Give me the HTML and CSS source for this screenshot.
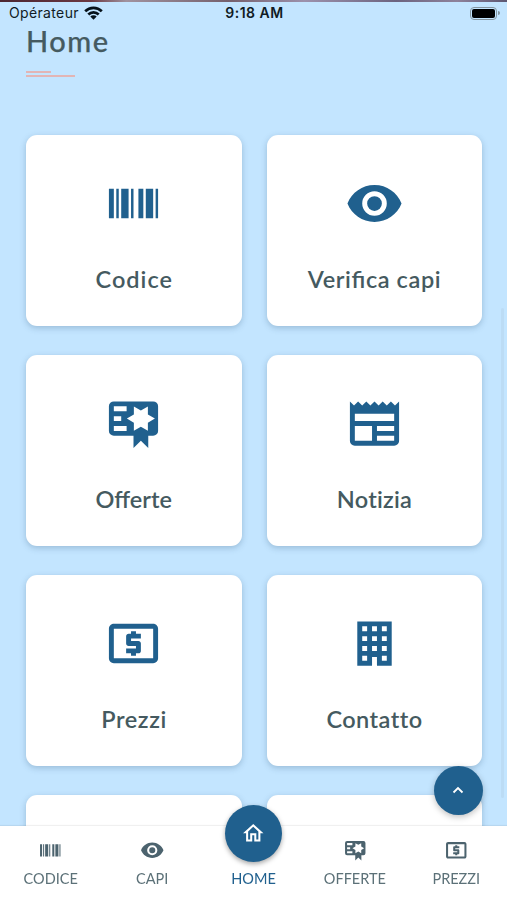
FILE: index.html
```html
<!DOCTYPE html>
<html lang="it">
<head>
<meta charset="utf-8">
<title>Home</title>
<link rel="stylesheet" href="styles.css">
</head>
<body>
<svg class="defs" aria-hidden="true">
  <symbol id="barcode" viewBox="0 0 24 24"><path d="M2 6h2v12H2zM5 6h1v12H5zM7 6h3v12H7zM11 6h1v12h-1zM14 6h2v12h-2zM17 6h3v12h-3zM21 6h1v12h-1z"/></symbol>
  <symbol id="eye" viewBox="0 0 24 24"><path d="M12 9a3 3 0 0 0 0 6 3 3 0 0 0 0-6M12 17A5 5 0 0 1 12 7a5 5 0 0 1 0 10M12 4.500C7 4.500 2.730 7.610 1 12c1.730 4.390 6 7.500 11 7.500s9.270-3.110 11-7.500C21.270 7.610 17 4.500 12 4.500z"/></symbol>
  <symbol id="offer" viewBox="0 0 24 24"><path fill-rule="evenodd" d="M4 3h16a2 2 0 0 1 2 2v10a2 2 0 0 1-2 2h-2v5l-3-3-3 3v-5H4a2 2 0 0 1-2-2V5a2 2 0 0 1 2-2zM4 5v2h5.200V5zM4 9v2h3V9zM4 13v2h5.200v-2zM20.700 10l-2.850-1.650V5.060L15 6.710l-2.850-1.650v3.290L9.300 10l2.850 1.650v3.290L15 13.290l2.850 1.650v-3.290z"/></symbol>
  <symbol id="news" viewBox="0 0 24 24"><path d="M22 3l-1.670 1.670L18.670 3 17 4.670 15.330 3l-1.660 1.670L12 3l-1.670 1.670L8.670 3 7 4.670 5.330 3 3.670 4.670 2 3v16c0 1.100.9 2 2 2h16c1.100 0 2-.9 2-2V3zM11 19H4v-6h7v6zm9 0h-7v-2h7v2zm0-4h-7v-2h7v2zm0-4H4V8h16v3z"/></symbol>
  <symbol id="cash" viewBox="0 0 24 24"><path d="M11 17h2v-1h1c.55 0 1-.45 1-1v-3c0-.55-.45-1-1-1h-3v-1h4V8h-2V7h-2v1h-1c-.55 0-1 .45-1 1v3c0 .55.450 1 1 1h3v1H9v2h2v1zm9-13H4c-1.110 0-2 .89-2 2v12c0 1.110.89 2 2 2h16c1.110 0 2-.89 2-2V6c0-1.110-.89-2-2-2zm0 14H4V6h16v12z"/></symbol>
  <symbol id="building" viewBox="0 0 24 24"><path fill-rule="evenodd" d="M5 3v18h6v-3.500h2V21h6V3zM7 5h2v2H7zM11 5h2v2h-2zM15 5h2v2h-2zM7 9h2v2H7zM11 9h2v2h-2zM15 9h2v2h-2zM7 13h2v2H7zM11 13h2v2h-2zM15 13h2v2h-2zM7 17h2v2H7zM15 17h2v2h-2z"/></symbol>
  <symbol id="house" viewBox="0 0 24 24"><path d="M12 5.690l5 4.500V18h-2v-6H9v6H7v-7.810l5-4.500M12 3L2 12h3v8h6v-6h2v6h6v-8h3"/></symbol>
</svg>

<header class="status">
  <div class="carrier"><span class="carrier-name">Opérateur</span>
    <svg class="wifi" viewBox="0 0 19 14"><g fill="none" stroke="#06121a" stroke-width="2.700"><path d="M1.200 5.200a11.800 11.800 0 0 1 16.600 0"/><path d="M4.300 8.500a7.400 7.400 0 0 1 10.400 0"/></g><path fill="#06121a" d="M6.300 10.500a4.500 4.500 0 0 1 6.400 0L9.500 13.700z"/></svg>
  </div>
  <div class="time">9:18 AM</div>
  <div class="battery"><span class="cell"><span class="charge"></span></span><span class="tip"></span></div>
</header>

<main class="page">
  <h1 class="title">Home</h1>
  <div class="rule"><span class="rule-short"></span><span class="rule-long"></span></div>
  <section class="grid">
    <a class="card"><svg class="icon"><use href="#barcode"/></svg><span class="label codice">Codice</span></a>
    <a class="card"><svg class="icon"><use href="#eye"/></svg><span class="label verifica">Verifica capi</span></a>
    <a class="card"><svg class="icon"><use href="#offer"/></svg><span class="label offerte">Offerte</span></a>
    <a class="card"><svg class="icon"><use href="#news"/></svg><span class="label notizia">Notizia</span></a>
    <a class="card"><svg class="icon"><use href="#cash"/></svg><span class="label prezzi">Prezzi</span></a>
    <a class="card"><svg class="icon"><use href="#building"/></svg><span class="label contatto">Contatto</span></a>
    <a class="card short"></a>
    <a class="card short"></a>
  </section>
</main>

<div class="scrollbar"></div>
<button class="to-top" aria-label="Su"><svg viewBox="0 0 12 8"><path d="M1.500 6.500L6 2l4.500 4.500"/></svg></button>

<nav class="tabs">
  <a class="tab"><svg class="tab-icon"><use href="#barcode"/></svg><span>CODICE</span></a>
  <a class="tab"><svg class="tab-icon"><use href="#eye"/></svg><span>CAPI</span></a>
  <a class="tab active"><span class="bubble"><svg class="tab-icon"><use href="#house"/></svg></span><span>HOME</span></a>
  <a class="tab"><svg class="tab-icon"><use href="#offer"/></svg><span>OFFERTE</span></a>
  <a class="tab"><svg class="tab-icon"><use href="#cash"/></svg><span>PREZZI</span></a>
</nav>
</body>
</html>
```
FILE: styles.css
```css
* { box-sizing: border-box; }

body {
  margin: 0;
  height: 900px;
  overflow: hidden;
  background: #c3e5ff;
  color: #455a60;
  font-family: Lato, "Liberation Sans", sans-serif;
}

.defs { position: absolute; width: 0; height: 0; }

.status {
  height: 24px;
  padding: 0 7px 0 9px;
  border-top: 2px solid #8d8299;
  border-image: linear-gradient(90deg, #4b2631, #6b3942 18%, #a0929f 25%, #75606c 45%, #9c91ac 60%, #6c637f 78%, #8e829b 90%, #5c5670) 1;
  display: grid;
  grid-template-columns: 1fr auto 1fr;
  align-items: center;
  font-family: Inter, "Liberation Sans", sans-serif;
  color: #101b24;
}
.carrier { display: flex; align-items: center; gap: 5px; font-size: 14px; line-height: 20px; }
.carrier-name { letter-spacing: 0.350px; }
.wifi { width: 19px; height: 14px; }
.time { font-size: 14px; font-weight: 600; line-height: 20px; letter-spacing: 0.5px; }
.battery { display: flex; justify-content: flex-end; align-items: center; gap: 1px; }
.cell { width: 27px; height: 13px; padding: 1px; border: 1px solid #84959f; border-radius: 4px; display: flex; }
.charge { flex: 1; border-radius: 2px; background: #000; }
.tip { width: 2px; height: 4px; border-radius: 0 2px 2px 0; background: #84959f; }

.page { height: 802px; overflow: hidden; padding: 0 25px 0 26px; }
.title { margin: 0; font-size: 29px; line-height: 34px; font-weight: 500; letter-spacing: 1.500px; -webkit-text-stroke: 0.250px; }
.rule { margin-top: 13px; height: 6px; display: flex; flex-direction: column; gap: 2px; }
.rule-short { width: 25px; height: 2px; background: #e2b5b5; }
.rule-long { width: 49px; height: 2px; background: #e2b5b5; }

.grid {
  margin-top: 57.500px;
  display: grid;
  grid-template-columns: 215.500px 215px;
  justify-content: space-between;
  grid-auto-rows: 191.500px;
  row-gap: 28.500px;
}
.card {
  display: flex;
  flex-direction: column;
  align-items: center;
  padding-top: 39.500px;
  border-radius: 11px;
  background: #fff;
  box-shadow: 0 2px 6px rgba(40, 80, 110, 0.28);
}
.short { height: 32px; border-radius: 11px 11px 0 0; }
.icon { width: 59px; height: 59px; fill: #20608e; }
.label {
  margin-top: 31px;
  font-size: 23.500px;
  line-height: 30px;
  font-weight: 600;
  white-space: nowrap;
}
.codice { letter-spacing: 1px; margin-right: -1px; }
.verifica { letter-spacing: 0.6px; font-feature-settings: "liga" 1; }
.offerte { letter-spacing: 0; }
.notizia { letter-spacing: 0.250px; }
.prezzi { letter-spacing: 0.6px; margin-right: -0.6px; }
.contatto { letter-spacing: 0.450px; font-variant-ligatures: none; }

.scrollbar { position: fixed; right: 3px; top: 308px; width: 3px; height: 490px; background: #bcdcf5; border-radius: 2px; }

.to-top {
  position: fixed;
  left: 433.500px;
  top: 765.500px;
  width: 49px;
  height: 49px;
  padding: 0;
  border: 0;
  border-radius: 50%;
  display: flex;
  align-items: center;
  justify-content: center;
  background: #20608e;
  box-shadow: 0 2px 6px rgba(0, 0, 0, 0.25);
}
.to-top svg { width: 12px; height: 8px; fill: none; stroke: #fff; stroke-width: 1.800; }

.tabs {
  position: fixed;
  inset: auto 0 0;
  height: 74px;
  display: grid;
  grid-template-columns: repeat(5, 1fr);
  background: #fff;
  box-shadow: 0 -1px 1px rgba(0, 0, 0, 0.06);
}
.tab {
  display: flex;
  flex-direction: column;
  align-items: center;
  justify-content: space-between;
  padding: 12px 0 11px;
  font-size: 14.500px;
  line-height: 20px;
  color: #5c7178;
}
.tab-icon { width: 24.500px; height: 24.500px; fill: #4c636e; }
.active { padding-top: 0; color: #20608e; }
.bubble {
  width: 57px;
  height: 57px;
  margin-top: -21.500px;
  border-radius: 50%;
  display: flex;
  align-items: center;
  justify-content: center;
  background: #20608e;
  box-shadow: 0 2px 5px rgba(0, 0, 0, 0.35);
}
.bubble .tab-icon { fill: #fff; }
```
